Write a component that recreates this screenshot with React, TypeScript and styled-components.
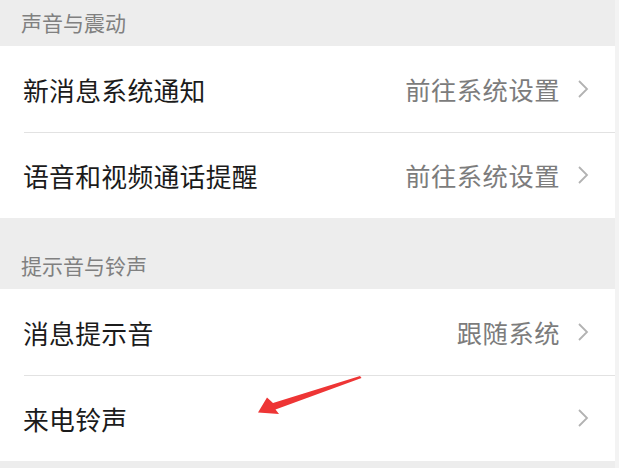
import styled, { createGlobalStyle } from 'styled-components';

const GlobalStyle = createGlobalStyle`
  html, body {
    margin: 0;
    padding: 0;
    background: #ffffff;
  }
  body {
    font-family: "Noto Sans CJK SC", "Noto Sans", sans-serif;
  }
`;

type Item = { title: string; value?: string };

const sections: { header: string; first?: boolean; items: Item[] }[] = [
  {
    header: '声音与震动',
    first: true,
    items: [
      { title: '新消息系统通知', value: '前往系统设置' },
      { title: '语音和视频通话提醒', value: '前往系统设置' },
    ],
  },
  {
    header: '提示音与铃声',
    items: [
      { title: '消息提示音', value: '跟随系统' },
      { title: '来电铃声' },
    ],
  },
];

const Chevron = () => (
  <svg width="12" height="20" viewBox="0 0 12 20" fill="none">
    <path d="M2 2 L10 10 L2 18" stroke="#b2b2b2" strokeWidth="1.8" strokeLinejoin="miter" />
  </svg>
);

const Arrow = () => (
  <svg width="112" height="42" viewBox="0 0 112 42">
    <polygon
      points="108,1 21,28 15,22.5 6,37.5 27,39 23.5,34.5 109.5,3"
      fill="#ee3535"
    />
  </svg>
);

const App = () => {
  return (
    <Page>
      <GlobalStyle />
      {sections.map((section) => (
        <div key={section.header}>
          <SectionHeader $first={section.first}>{section.header}</SectionHeader>
          <Group>
            {section.items.map((item, i) => (
              <Row key={item.title} $divider={i > 0}>
                <Title>{item.title}</Title>
                <Right>
                  {item.value && <Value>{item.value}</Value>}
                  <Chevron />
                </Right>
              </Row>
            ))}
          </Group>
        </div>
      ))}
      <Bottom />
      <Pointer>
        <Arrow />
      </Pointer>
    </Page>
  );
};

const Page = styled.div`
  position: relative;
  width: 619px;
  height: 468px;
  overflow: hidden;
  background: #ededed;
  box-sizing: border-box;
  border-right: 4px solid #f3f3f3;
`;

const SectionHeader = styled.div<{ $first?: boolean }>`
  height: ${(p) => (p.$first ? '46px' : '71px')};
  box-sizing: border-box;
  padding: ${(p) => (p.$first ? '0' : '35px')} 0 0 21px;
  display: flex;
  align-items: ${(p) => (p.$first ? 'center' : 'flex-start')};
  font-size: 21px;
  color: #808080;
  background: #ededed;
  line-height: 1.2;
`;

const Group = styled.div`
  background: #ffffff;
`;

const Row = styled.div<{ $divider?: boolean }>`
  position: relative;
  height: 86px;
  display: flex;
  align-items: center;
  justify-content: space-between;
  padding: 0 26px 0 23px;
  box-sizing: border-box;

  &::before {
    content: '';
    display: ${(p) => (p.$divider ? 'block' : 'none')};
    position: absolute;
    top: 0;
    left: 24px;
    right: 0;
    height: 1px;
    background: #e2e2e2;
  }
`;

const Title = styled.span`
  font-size: 25.8px;
  color: #1b1b1b;
  letter-spacing: 0.3px;
`;

const Right = styled.div`
  display: flex;
  align-items: center;
  gap: 17px;
`;

const Value = styled.span`
  font-size: 25.3px;
  color: #7c7c7c;
  letter-spacing: 0.5px;
`;

const Bottom = styled.div`
  height: 10px;
  background: #ededed;
`;

const Pointer = styled.div`
  position: absolute;
  left: 252px;
  top: 375px;
  line-height: 0;
`;

export default App;
